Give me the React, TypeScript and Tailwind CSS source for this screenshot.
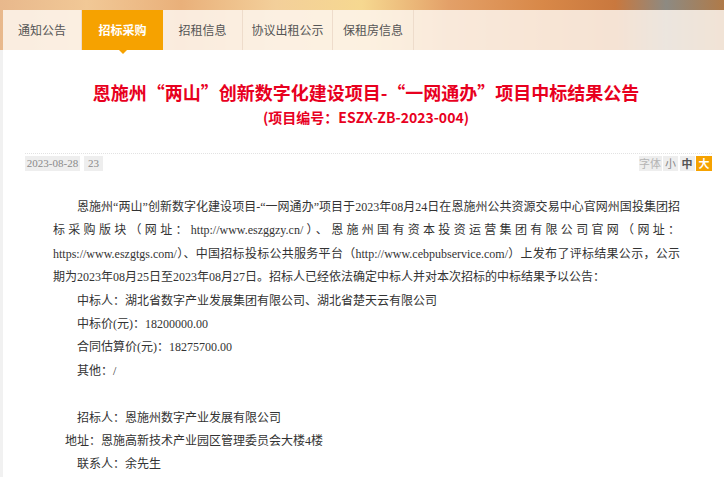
import React from "react";

const tabs = ["通知公告", "招标采购", "招租信息", "协议出租公示", "保租房信息"];
const tabW = [79, 81, 80, 90, 81];

export default function App() {
  const body = "font-['Liberation_Serif','Noto_Sans_CJK_SC',serif]";
  return (
    <div className="w-[724px] h-[477px] overflow-hidden bg-[#f1f1f1] font-['Noto_Sans_CJK_SC',sans-serif]">
      <header className="h-[50px] bg-[linear-gradient(90deg,#e8b88c_0%,#f1c896_12%,#e9b07a_25%,#f3cf9a_38%,#f6d890_50%,#e3a068_62%,#d88848_75%,#c9783e_85%,#8d8a82_92%,#b07a48_100%)]">
        <div className="h-[10px]" />
        <nav className="ml-[3px] h-[40px] bg-[#fdf6ee]/85 flex">
          {tabs.map((t, i) => (
            <div
              key={t}
              style={{ width: tabW[i] }}
              className={
                i === 1
                  ? "relative h-full flex items-center justify-center bg-[#f6a200] text-white font-bold text-[12px]"
                  : "relative h-full flex items-center justify-center text-[#555] text-[12px] border-r border-[#eedccb]"
              }
            >
              {t}
              {i === 1 && (
                <span className="absolute left-1/2 -translate-x-1/2 top-full w-0 h-0 border-l-[4px] border-r-[4px] border-t-[4px] border-l-transparent border-r-transparent border-t-[#f6a200]" />
              )}
            </div>
          ))}
        </nav>
      </header>
      <main className="ml-[3px] bg-white h-[427px]">
        <div className="pt-[28px] pl-[5px] text-center text-[#e8001e] font-bold">
          <div className="text-[18px] leading-[28px]">
            恩施州“两山”创新数字化建设项目-“一网通办”项目中标结果公告
          </div>
          <div className="mt-[1px] text-[14px] leading-[20px]">(项目编号：ESZX-ZB-2023-004)</div>
        </div>
        <div className="ml-[22px] mr-[12px] mt-[26px] border-t border-dotted border-[#e2e2e2] pt-[2px] flex items-center justify-between">
          <div className="flex gap-[4px] text-[11px] text-[#8a8a8a] font-['Liberation_Serif',serif]">
            <span className="bg-[#eeeeee] h-[15px] w-[55px] flex items-center justify-center">2023-08-28</span>
            <span className="bg-[#eeeeee] h-[15px] w-[19px] flex items-center justify-center">23</span>
          </div>
          <div className="flex gap-[1.5px] text-[11px]">
            <span className="bg-[#eeeeee] text-[#b5b5b5] h-[15px] w-[23px] flex items-center justify-center">字体</span>
            <span className="bg-[#eeeeee] text-[#888] h-[15px] w-[15px] flex items-center justify-center">小</span>
            <span className="bg-[#eeeeee] text-[#555] font-bold h-[15px] w-[15px] flex items-center justify-center">中</span>
            <span className="bg-[#f6a200] text-white font-bold h-[15px] w-[16px] flex items-center justify-center">大</span>
          </div>
        </div>
        <div className={`ml-[50px] w-[627px] mt-[25px] text-[12px] leading-[23.4px] text-[#333] ${body}`}>
          <div className="pl-[24px] text-justify [text-align-last:justify] whitespace-nowrap">
            恩施州“两山”创新数字化建设项目-“一网通办”项目于2023年08月24日在恩施州公共资源交易中心官网州国投集团招
          </div>
          <div className="text-justify [text-align-last:justify]">
            标采购版块（网址：http://www.eszggzy.cn/）、恩施州国有资本投资运营集团有限公司官网（网址：
          </div>
          <div className="text-justify [text-align-last:justify]">
            https://www.eszgtgs.com/）、中国招标投标公共服务平台（http://www.cebpubservice.com/）上发布了评标结果公示，公示
          </div>
          <div>期为2023年08月25日至2023年08月27日。招标人已经依法确定中标人并对本次招标的中标结果予以公告：</div>
          <div className="pl-[24px]">中标人：湖北省数字产业发展集团有限公司、湖北省楚天云有限公司</div>
          <div className="pl-[24px]">中标价(元)：18200000.00</div>
          <div className="pl-[24px]">合同估算价(元)：18275700.00</div>
          <div className="pl-[24px]">其他：/</div>
          <div className="h-[23.4px]" />
          <div className="pl-[24px]">招标人：恩施州数字产业发展有限公司</div>
          <div className="pl-[12px]">地址：恩施高新技术产业园区管理委员会大楼4楼</div>
          <div className="pl-[24px]">联系人：余先生</div>
        </div>
      </main>
    </div>
  );
}
